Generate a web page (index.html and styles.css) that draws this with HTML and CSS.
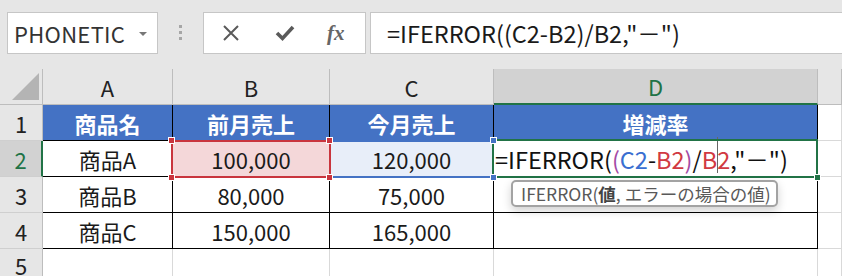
FILE: index.html
```html
<!DOCTYPE html>
<html>
	<head>
		<meta charset="utf-8">
		<title>IFERROR</title>
		<link rel="stylesheet" href="styles.css">
	</head>
	<body>
		<div class="toolbar">
			<div class="nameBox">
				<span class="nameText">PHONETIC</span>
				<span class="dropArrow"></span>
			</div>
			<div class="grip"><i></i><i></i><i></i></div>
			<div class="fxBox">
				<svg class="icon" width="18" height="18" viewBox="0 0 18 18">
					<path d="M2 2 L16 16 M16 2 L2 16" stroke="#5a5a5a" stroke-width="2" fill="none"/>
				</svg>
				<svg class="icon" width="20" height="18" viewBox="0 0 20 18">
					<path d="M2 9 L7.5 14.5 L18 3" stroke="#5a5a5a" stroke-width="3.6" fill="none"/>
				</svg>
				<span class="fx">fx</span>
			</div>
			<div class="formulaBar">=IFERROR((C2-B2)/B2,"－")</div>
		</div>

		<div class="sheet">
			<!-- 列見出し -->
			<div class="corner"><span class="cornerTri"></span></div>
			<div class="colHead">A</div>
			<div class="colHead">B</div>
			<div class="colHead">C</div>
			<div class="colHead selCol">D</div>
			<div class="colHead"></div>

			<!-- 1行目 -->
			<div class="rowHead">1</div>
			<div class="cell tb th">商品名</div>
			<div class="cell tb th">前月売上</div>
			<div class="cell tb th">今月売上</div>
			<div class="cell tb th">増減率</div>
			<div class="cell"></div>

			<!-- 2行目 -->
			<div class="rowHead selRow">2</div>
			<div class="cell tb">商品A</div>
			<div class="cell tb refRed">100,000
				<span class="knob red k1"></span><span class="knob red k2"></span>
				<span class="knob red k3"></span><span class="knob red k4"></span>
			</div>
			<div class="cell tb refBlue">120,000
				<span class="knob blue k2"></span><span class="knob blue k4"></span>
			</div>
			<div class="cell tb active">
				<span class="editText">=IFERROR(<span class="pr">(</span><span class="rb">C2</span>-<span class="rr">B2</span><span class="pr">)</span>/<span class="rr">B</span><span class="caret"></span><span class="rr">2</span>,"－")</span>
				<span class="fillHandle"></span>
				<div class="tip">IFERROR(<b>値</b>, エラーの場合の値)</div>
			</div>
			<div class="cell"></div>

			<!-- 3行目 -->
			<div class="rowHead">3</div>
			<div class="cell tb">商品B</div>
			<div class="cell tb">80,000</div>
			<div class="cell tb">75,000</div>
			<div class="cell tb"></div>
			<div class="cell"></div>

			<!-- 4行目 -->
			<div class="rowHead">4</div>
			<div class="cell tb">商品C</div>
			<div class="cell tb">150,000</div>
			<div class="cell tb">165,000</div>
			<div class="cell tb"></div>
			<div class="cell"></div>

			<!-- 5行目 -->
			<div class="rowHead">5</div>
			<div class="cell"></div>
			<div class="cell"></div>
			<div class="cell"></div>
			<div class="cell"></div>
			<div class="cell"></div>
		</div>
	</body>
</html>
```

FILE: styles.css
```css
*{
	padding: 0;
	margin: 0;
	box-sizing: border-box;
}
body{
	width: 842px;
	height: 276px;
	overflow: hidden;
	background-color: #fff;
	font-family: "Noto Sans CJK JP", "Noto Sans", sans-serif;
	color: #1a1a1a;
}

/* 上部の数式バー */
.toolbar{
	display: flex;
	align-items: flex-start;
	height: 69px;
	padding: 12px 0 0 7px;
	background-color: #e6e6e6;
}
.nameBox{
	position: relative;
	display: flex;
	align-items: center;
	width: 151px;
	height: 42px;
	padding-left: 6px;
	background-color: #fff;
	border: 1px solid #c6c6c6;
}
.nameText{
	font-size: 22px;
	letter-spacing: 0.3px;
	color: #333;
}
.dropArrow{
	position: absolute;
	right: 10px;
	top: 19px;
	border-left: 4px solid transparent;
	border-right: 4px solid transparent;
	border-top: 4px solid #777;
}
.grip{
	display: flex;
	flex-direction: column;
	gap: 3px;
	margin: 13px 0 0 21px;
}
.grip i{
	display: block;
	width: 3px;
	height: 3px;
	background-color: #a6a6a6;
}
.fxBox{
	display: flex;
	align-items: center;
	width: 163px;
	height: 42px;
	margin-left: 21px;
	padding-left: 18px;
	background-color: #fff;
	border: 1px solid #c6c6c6;
}
.fxBox .icon{
	margin-right: 35px;
}
.fx{
	font-family: "Liberation Serif", serif;
	font-style: italic;
	font-weight: bold;
	font-size: 21px;
	color: #666;
	margin-left: -3px;
}
.formulaBar{
	flex: 1;
	height: 42px;
	margin-left: 4px;
	margin-right: -2px;
	padding-left: 16px;
	line-height: 40px;
	font-size: 23.5px;
	background-color: #fff;
	border: 1px solid #c6c6c6;
	white-space: nowrap;
}

/* シート */
.sheet{
	display: grid;
	grid-template-columns: 43px 130px 157px 164px 324px 1fr;
	grid-template-rows: 36px 36px 36px 36px 36px 1fr;
	height: 207px;
}
.corner{
	position: relative;
	background-color: #e6e6e6;
	border-right: 1px solid #bdbdbd;
	border-bottom: 1px solid #bdbdbd;
}
.cornerTri{
	position: absolute;
	right: 3px;
	bottom: 4px;
	border-left: 27px solid transparent;
	border-bottom: 27px solid #b4b4b4;
}
.colHead{
	display: flex;
	align-items: center;
	justify-content: center;
	font-size: 22px;
	color: #222;
	background-color: #e6e6e6;
	border-right: 1px solid #bdbdbd;
	border-bottom: 1px solid #bdbdbd;
}
.colHead.selCol{
	background-color: #d2d2d2;
	color: #217346;
	border-bottom: 2px solid #217346;
}
.rowHead{
	display: flex;
	align-items: center;
	justify-content: center;
	font-size: 22px;
	color: #222;
	background-color: #e6e6e6;
	border-right: 1px solid #bdbdbd;
	border-bottom: 1px solid #cfcfcf;
}
.rowHead.selRow{
	background-color: #d2d2d2;
	color: #217346;
	border-right: 2px solid #217346;
}
.cell{
	position: relative;
	display: flex;
	align-items: center;
	justify-content: center;
	font-size: 22px;
	color: #1a1a1a;
	border-right: 1px solid #d9d9d9;
	border-bottom: 1px solid #d9d9d9;
	white-space: nowrap;
}
.cell.tb{
	border-right-color: #000;
	border-bottom-color: #000;
}
.cell.th{
	background-color: #4472c4;
	color: #fff;
	font-weight: bold;
}

/* 参照セルの枠 */
.refRed{
	background-color: #f4d7d9;
}
.refRed::after{
	content: "";
	position: absolute;
	top: -1px;
	left: -2px;
	right: -2px;
	bottom: -2px;
	border: 2px solid #c9353e;
	z-index: 2;
}
.refBlue{
	background-color: #e8eef9;
}
.refBlue::after{
	content: "";
	position: absolute;
	top: -1px;
	left: -1px;
	right: -1px;
	bottom: -2px;
	border: 2px solid #4472c4;
	z-index: 1;
}
.knob{
	position: absolute;
	width: 7px;
	height: 7px;
	border: 1px solid #fff;
	z-index: 5;
}
.knob.red{
	background-color: #c9353e;
}
.knob.blue{
	background-color: #4472c4;
}
.k1{ top: -4px; left: -5px; }
.k2{ top: -4px; right: -4px; }
.k3{ bottom: -5px; left: -5px; }
.k4{ bottom: -5px; right: -4px; }

/* アクティブセル */
.active{
	justify-content: flex-start;
	padding-left: 1px;
	font-size: 23.5px;
}
.active::after{
	content: "";
	position: absolute;
	top: -2px;
	left: -2px;
	right: -1px;
	bottom: -2px;
	border: 2px solid #217346;
	z-index: 3;
}
.fillHandle{
	position: absolute;
	right: -4px;
	bottom: -5px;
	width: 7px;
	height: 7px;
	background-color: #217346;
	border: 1px solid #fff;
	z-index: 4;
}
.editText{
	color: #111;
}
.pr{ color: #a34aa6; }
.rb{ color: #3a6fd1; }
.rr{ color: #d13a42; }
.caret{
	position: relative;
	display: inline-block;
	width: 0;
	height: 1em;
}
.caret::before{
	content: "";
	position: absolute;
	left: 0;
	top: -8px;
	height: 36px;
	border-left: 1px solid #666;
}

/* 関数のヒント */
.tip{
	position: absolute;
	left: 17px;
	top: 39px;
	width: 267px;
	height: 27px;
	padding-left: 8px;
	line-height: 23px;
	font-size: 17.5px;
	color: #595959;
	background-color: #fff;
	border: 2px solid #a3a3a3;
	border-radius: 5px;
	box-shadow: 0 4px 10px rgba(0, 0, 0, 0.18);
	z-index: 6;
}
.tip b{
	color: #444;
}
```
